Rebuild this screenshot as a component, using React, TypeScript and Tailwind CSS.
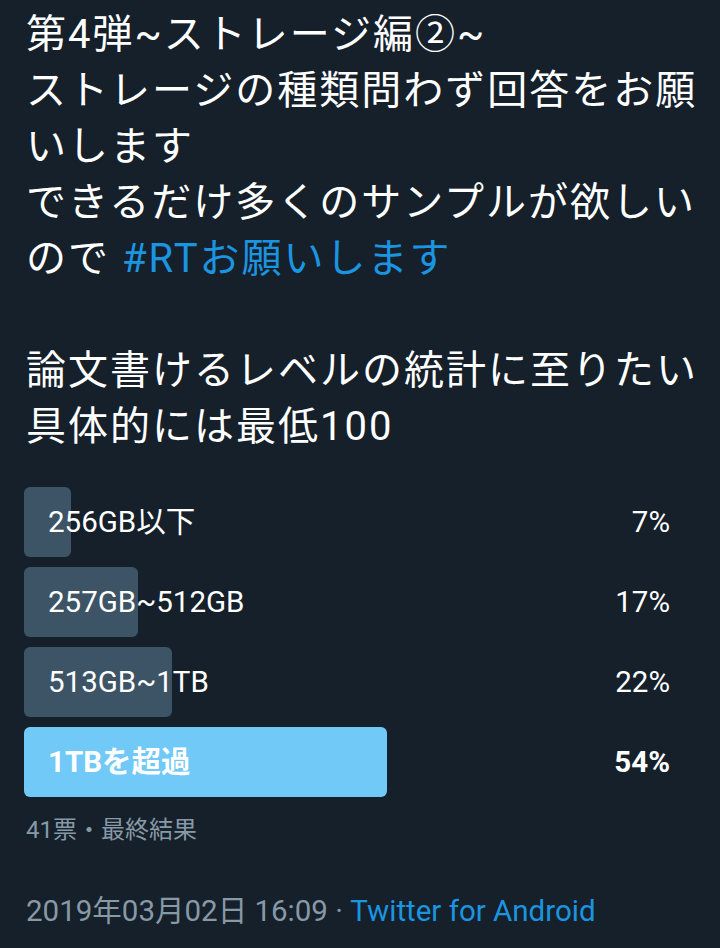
const options = [
  { label: '256GB以下', pct: 7 },
  { label: '257GB~512GB', pct: 17 },
  { label: '513GB~1TB', pct: 22 },
  { label: '1TBを超過', pct: 54, winner: true },
]

function PollRow({ label, pct, winner }: { label: string; pct: number; winner?: boolean }) {
  return (
    <div className="relative flex h-[70px] items-center">
      <div
        className={`absolute left-0 top-0 h-full rounded-md ${winner ? 'bg-[#71c9f8]' : 'bg-[#3d5466]'}`}
        style={{ width: `${pct}%` }}
      />
      <span className={`relative pl-6 text-[29.5px] text-white ${winner ? 'font-bold' : ''}`}>{label}</span>
      <span className={`relative ml-auto pr-[26px] text-[29.5px] text-white ${winner ? 'font-bold' : ''}`}>{pct}%</span>
    </div>
  )
}

export default function App() {
  return (
    <div
      className="min-h-[948px] w-[720px] bg-[#15202b] px-6 pt-[7px]"
      style={{ fontFamily: 'Roboto, "Noto Sans CJK JP", sans-serif' }}
    >
      <div className="whitespace-nowrap pl-[2px] text-[40px] leading-[56px] tracking-[2px] text-white">
        <div>第4弾~ストレージ編②~</div>
        <div>ストレージの種類問わず回答をお願</div>
        <div>いします</div>
        <div>できるだけ多くのサンプルが欲しい</div>
        <div>
          ので <span className="text-[#1b95e0]">#RTお願いします</span>
        </div>
        <div>&nbsp;</div>
        <div>論文書けるレベルの統計に至りたい</div>
        <div>具体的には最低100</div>
      </div>

      <div className="mt-[32px] flex flex-col gap-[10px]">
        {options.map(o => (
          <PollRow key={o.label} {...o} />
        ))}
      </div>

      <div className="mt-[17px] pl-[2px] text-[24px] leading-[32px] text-[#8899a6]">41票・最終結果</div>

      <div className="mt-[47px] pl-[2px] text-[29.5px] leading-[36px] text-[#8899a6]">
        2019年03月02日 16:09 · <span className="text-[#1b95e0]">Twitter for Android</span>
      </div>
    </div>
  )
}
